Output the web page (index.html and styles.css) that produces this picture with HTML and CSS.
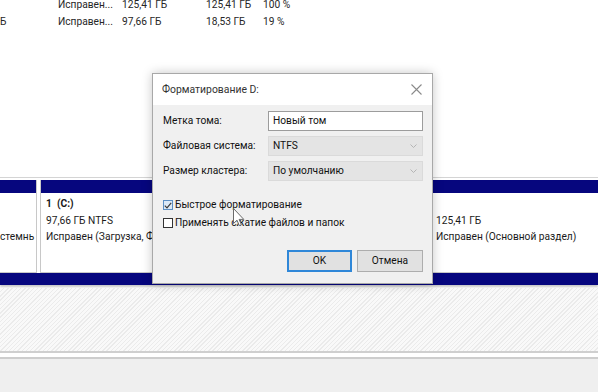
FILE: index.html
```html
<!DOCTYPE html>
<html lang="ru">
<head>
<meta charset="utf-8">
<link rel="stylesheet" href="styles.css">
</head>
<body>
<div class="screen">
  <div class="list">
    <div class="row"><span class="c0"></span><span class="c1">Исправен...</span><span class="c2">125,41 ГБ</span><span class="c3">125,41 ГБ</span><span class="c4">100 %</span></div>
    <div class="row"><span class="c0">Б</span><span class="c1">Исправен...</span><span class="c2">97,66 ГБ</span><span class="c3">18,53 ГБ</span><span class="c4">19 %</span></div>
  </div>

  <div class="disk">
    <div class="part p1">
      <div class="bar"></div>
      <div class="pbody"><div class="ln">&nbsp;</div><div class="ln">&nbsp;</div><div class="ln">стемнь</div></div>
    </div>
    <div class="part p2">
      <div class="bar"></div>
      <div class="pbody"><div class="ln b">1&nbsp; (C:)</div><div class="ln">97,66 ГБ NTFS</div><div class="ln">Исправен (Загрузка, Ф</div></div>
    </div>
    <div class="part p3">
      <div class="bar"></div>
      <div class="pbody"><div class="ln">&nbsp;</div><div class="ln">125,41 ГБ</div><div class="ln">Исправен (Основной раздел)</div></div>
    </div>
  </div>

  <div class="disk2">
    <div class="bar2"></div>
    <div class="hatch"></div>
  </div>
  <div class="sep"></div>
  <div class="status"></div>

  <div class="dialog">
    <div class="title">
      <span>Форматирование D:</span>
      <svg class="close" width="11" height="11" viewBox="0 0 11 11"><path d="M0.5 0.5 L10.5 10.5 M10.5 0.5 L0.5 10.5" stroke="#8a8a8a" stroke-width="1.1" fill="none"/></svg>
    </div>
    <div class="dbody">
      <div class="form">
        <label class="lbl">Метка тома:</label>
        <div class="input">Новый том</div>
        <label class="lbl">Файловая система:</label>
        <div class="select">NTFS<svg class="chev" width="7" height="4" viewBox="0 0 7 4"><path d="M0.5 0.5 L3.5 3.5 L6.5 0.5" stroke="#b5b5b5" fill="none"/></svg></div>
        <label class="lbl">Размер кластера:</label>
        <div class="select">По умолчанию<svg class="chev" width="7" height="4" viewBox="0 0 7 4"><path d="M0.5 0.5 L3.5 3.5 L6.5 0.5" stroke="#b5b5b5" fill="none"/></svg></div>
      </div>
      <div class="checks">
        <div class="chk"><span class="box on"><svg width="8" height="7" viewBox="0 0 8 7"><path d="M0.8 3.6 L3 5.8 L7.2 0.8" stroke="#3b3b3b" stroke-width="1.2" fill="none"/></svg></span><span>Быстрое форматирование</span></div>
        <div class="chk"><span class="box"></span><span>Применять сжатие файлов и папок</span></div>
      </div>
      <div class="buttons">
        <div class="btn ok">OK</div>
        <div class="btn">Отмена</div>
      </div>
    </div>
  </div>

  <svg class="cursor" width="12" height="19" viewBox="0 0 12 19"><path d="M0.5 0.5 L0.5 15.5 L4 12.2 L6.3 17.6 L8.4 16.7 L6.1 11.4 L10.8 11.4 Z" fill="#fff" stroke="#6a6a6a" stroke-width="1"/></svg>
</div>
</body>
</html>
```
FILE: styles.css
```css
* { box-sizing: border-box; }
html, body { margin: 0; padding: 0; }
body {
  width: 598px;
  height: 392px;
  overflow: hidden;
  background: #ffffff;
  font-family: Roboto, "Liberation Sans", sans-serif;
  font-size: 10.2px;
  color: #111;
}
.screen {
  position: relative;
  width: 598px;
  height: 392px;
  overflow: hidden;
  display: flex;
  flex-direction: column;
}
.list {
  height: 180px;
  margin-top: -3px;
  color: #262626;
}
.row {
  display: grid;
  grid-template-columns: 58px 64px 84px 57px 60px;
  height: 16.5px;
  line-height: 16px;
  white-space: nowrap;
}
.row span { overflow: hidden; }

.disk {
  display: flex;
  gap: 3px;
  height: 96px;
  border-top: 1px solid #d4d4d4;
  padding-top: 2px;
}
.part {
  display: flex;
  flex-direction: column;
  border-right: 1px solid #c8c8c8;
  border-bottom: 1px solid #c8c8c8;
  overflow: hidden;
}
.p1 { width: 37px; }
.p2 { width: 388px; border-left: 1px solid #c8c8c8; }
.p3 { flex: 1; border-right: none; border-left: 1px solid #c8c8c8; }
.bar { height: 13px; background: #06067e; flex: none; }
.pbody {
  padding: 3px 0 0 5px;
  white-space: nowrap;
  color: #1a1a1a;
}
.p1 .pbody { padding-left: 0; }
.p3 .pbody { padding-left: 4px; }
.ln { height: 16.5px; line-height: 16px; }
.b { font-weight: 700; }

.disk2 { display: flex; flex-direction: column; }
.bar2 {
  height: 12px;
  background: #06067e;
  box-shadow: 0 2px 2px rgba(0,0,0,0.22);
}
.hatch {
  height: 65px;
  margin-top: 3px;
  background-color: #f8f8f8;
  background-image: repeating-linear-gradient(-45deg, #f9f9f9 0 2px, #ebebeb 2px 3px);
  border-bottom: 2px solid #cfcfcf;
}
.sep {
  height: 6px;
  border-top: 3px solid #ffffff;
  border-bottom: 2px solid #cdcdcd;
  background: #ffffff;
}
.status { flex: 1; background: #efefef; }

/* dialog */
.dialog {
  position: absolute;
  left: 152px;
  top: 73px;
  width: 281px;
  height: 211px;
  background: #f0f0f0;
  border: 1px solid #a8a8a8;
  box-shadow: 0 0 10px rgba(0,0,0,0.22);
  display: flex;
  flex-direction: column;
  color: #111;
}
.title {
  height: 31px;
  background: #ffffff;
  display: flex;
  align-items: center;
  justify-content: space-between;
  padding: 0 10px 0 9px;
  font-size: 10.4px;
  color: #333;
}
.close { display: block; }
.dbody {
  flex: 1;
  padding: 6px 9px 11px 10px;
  display: flex;
  flex-direction: column;
}
.form {
  display: grid;
  grid-template-columns: 105px 1fr;
  row-gap: 5px;
  align-items: center;
}
.lbl { line-height: 20px; }
.input, .select {
  height: 20px;
  line-height: 18px;
  padding: 0 4px;
}
.input { background: #fff; border: 1px solid #9c9c9c; }
.select {
  background: #e4e4e4;
  border: 1px solid #dadada;
  display: flex;
  align-items: center;
  justify-content: space-between;
}
.chev { display: block; margin-right: 1px; }
.checks {
  margin-top: 17px;
  display: flex;
  flex-direction: column;
  gap: 4px;
}
.chk {
  display: flex;
  align-items: center;
  gap: 2px;
  height: 14px;
  line-height: 14px;
}
.box {
  width: 10px;
  height: 10px;
  border: 1px solid #333;
  background: #fff;
  display: flex;
  align-items: center;
  justify-content: center;
  flex: none;
}
.box.on { border-color: #5c8fc4; background: #dbe9f7; }
.box svg { display: block; }
.buttons {
  margin-top: auto;
  display: flex;
  justify-content: flex-end;
  gap: 5px;
}
.btn {
  width: 66px;
  height: 22px;
  line-height: 20px;
  text-align: center;
  background: #e1e1e1;
  border: 1px solid #adadad;
}
.btn.ok {
  width: 65px;
  border: 2px solid #2f87d8;
  line-height: 18px;
}
.cursor {
  position: absolute;
  left: 233px;
  top: 208px;
}
```
